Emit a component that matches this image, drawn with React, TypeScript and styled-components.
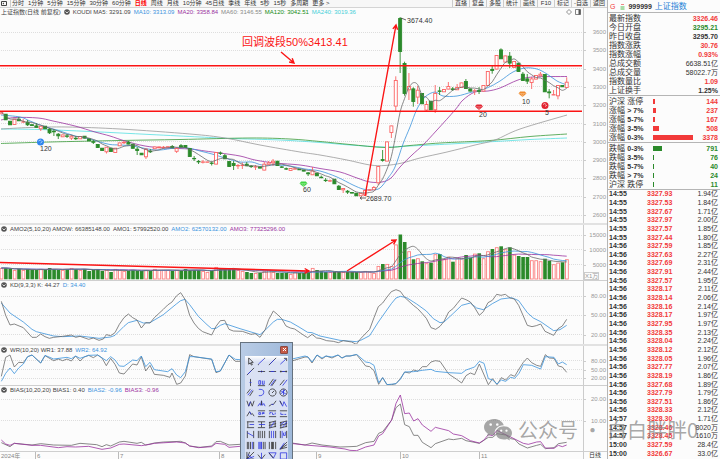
import React from "react";
import styled, { createGlobalStyle } from "styled-components";

const RED = "#f23a3a";
const GREEN = "#2b8a2b";
const BLUE = "#3b93dc";
const PURPLE = "#9a32a0";
const GRAY = "#6a6a6a";

const GlobalStyle = createGlobalStyle`
  * { box-sizing: border-box; }
  body {
    margin: 0;
    background: #fcfcfc;
    color: #333;
    font: 6px/8px "Liberation Sans", "Noto Sans CJK SC", sans-serif;
  }
  button { font: inherit; color: inherit; border: 0; padding: 0; background: none; white-space: nowrap; }
`;

/* ---------- layout ---------- */

const Page = styled.div`
  position: relative;
  display: grid;
  grid-template-columns: minmax(0, 1fr) 113px;
  min-height: 100vh;
  overflow: hidden;
`;

const ChartSide = styled.main`
  min-width: 0;
  display: flex;
  flex-direction: column;
`;

const Toolbar = styled.nav`
  display: flex;
  justify-content: space-between;
  height: 8px;
  border-bottom: 1px solid #d4d4d4;
  background: #f7f7f7;
  line-height: 7px;
`;

const Periods = styled.div`
  display: flex;
  gap: 4px;
  padding-left: 1px;
`;

const Actions = styled.div`
  display: flex;
`;

const LayoutButton = styled.button`
  display: flex;
  align-items: center;
  width: 10px;
  margin-right: -3px;
  border-right: 1px solid #ccc;
`;

const PeriodButton = styled.button<{ $active?: boolean }>`
  color: ${(p) => (p.$active ? "#f00" : "#333")};
  font-weight: ${(p) => (p.$active ? 700 : 400)};
`;

const ActionButton = styled.button`
  min-width: 17px;
  padding: 0 2px;
  border-left: 1px solid #ccc;
`;

const Panel = styled.section<{ $thick?: boolean }>`
  display: grid;
  grid-template-columns: minmax(0, 1fr) 24px;
  border-bottom: ${(p) => (p.$thick ? "2px solid #e2e2e2" : "1px solid #cfcfcf")};
`;

const PanelHeader = styled.header`
  display: flex;
  align-items: center;
  gap: 3px;
  height: 8px;
  padding-left: 1px;
  white-space: nowrap;
`;

const Reading = styled.span<{ $color?: string }>`
  color: ${(p) => p.$color || "#444"};
`;

const HeaderTools = styled.span`
  display: flex;
  gap: 3px;
  margin-left: auto;
  padding-right: 2px;
`;

const Plot = styled.svg`
  display: block;
  width: 100%;
  height: auto;
`;

const AxisTop = styled.div`
  border-left: 1px solid #ccc;
`;

const Axis = styled.div`
  position: relative;
  border-left: 1px solid #ccc;
  color: #999;
`;

const AxisLabel = styled.span`
  position: absolute;
  right: 1px;
  transform: translateY(-50%);
  &::before {
    content: "";
    position: absolute;
    right: 20px;
    top: 4px;
    width: 2px;
    border-top: 1px solid #ccc;
  }
`;

const UnitLabel = styled.span`
  position: absolute;
  left: 0;
  bottom: 0;
  height: 8px;
  line-height: 7px;
  border: 1px solid #ccc;
`;

const DateBar = styled.footer`
  display: grid;
  grid-template-columns: minmax(0, 1fr) 24px;
  color: #888;
  line-height: 7px;
`;

const PeriodName = styled.div`
  padding-left: 5px;
  border-left: 1px solid #ccc;
  color: #333;
`;

const Quote = styled.aside`
  display: flex;
  flex-direction: column;
  border-left: 1px solid #b5b5b5;
  font-size: 7px;
  line-height: 9px;
  padding-bottom: 1px;
`;

const QuoteTitle = styled.h1`
  display: flex;
  align-items: center;
  gap: 3px;
  height: 13px;
  margin: 0;
  padding: 0 2px;
  border-bottom: 1px solid #b5b5b5;
  font-size: 7px;
  white-space: nowrap;
`;

const TitleName = styled.span`
  color: #1d7fd6;
  font-size: 8px;
  font-weight: 400;
`;

const TitleFlag = styled.span`
  color: ${RED};
  font-weight: 400;
  margin-right: 2px;
`;

const StatTable = styled.table`
  display: block;
  padding: 1px 2px 0 1px;
  border-bottom: 1px solid #b5b5b5;
  tbody { display: block; }
`;

const StatRow = styled.tr<{ $bars?: boolean }>`
  display: grid;
  grid-template-columns: ${(p) => (p.$bars ? "44px 40px 1fr" : "1fr auto")};
  height: 9px;
  align-items: center;
`;

const StatName = styled.th`
  padding: 0;
  font-size: 8px;
  font-weight: 400;
  text-align: left;
  white-space: nowrap;
  b { font-size: 7px; }
`;

const StatValue = styled.td<{ $color?: string; $plain?: boolean }>`
  padding: 0;
  color: ${(p) => p.$color || "#333"};
  font-weight: ${(p) => (p.$plain ? 400 : 700)};
  text-align: right;
`;

const BarCell = styled.td`
  padding: 0;
`;

const Bar = styled.div<{ $color: string }>`
  height: 5px;
  background: ${(p) => p.$color};
`;

const TickTable = styled.table`
  display: flex;
  flex: 1;
  padding: 0 2px 0 1px;
  tbody { flex: 1; display: grid; grid-auto-rows: 1fr; }
`;

const TickRow = styled.tr`
  display: grid;
  grid-template-columns: 38px 26px 1fr;
  align-items: center;
  line-height: 8px;
  td { padding: 0; }
`;

const TickTime = styled.td`
  font-weight: 700;
`;

const TickPrice = styled.td`
  color: ${RED};
  font-weight: 700;
`;

const TickAmount = styled.td`
  text-align: right;
`;

const ToolBox = styled.div`
  position: absolute;
  left: 240px;
  top: 342px;
  width: 53px;
  height: 122px;
  display: flex;
  flex-direction: column;
  padding: 0 4px 2px;
  border: 1px solid #66727f;
  background: linear-gradient(90deg, #b9cce6, #9fb9da);
`;

const ToolTitle = styled.div`
  display: flex;
  justify-content: flex-end;
  align-items: center;
  height: 13px;
`;

const CloseButton = styled.button`
  display: flex;
  width: 8px;
  height: 8px;
  align-items: center;
  justify-content: center;
  background: #c65a48;
  border: 1px solid #8a4a44;
  border-radius: 1px;
`;

const ToolGrid = styled.div`
  flex: 1;
  display: grid;
  grid-template-columns: repeat(4, 11px);
  grid-auto-rows: 1fr;
  background: linear-gradient(#fff 0, #dae1f3 6px);
`;

const ToolButton = styled.button`
  display: flex;
  align-items: center;
  justify-content: center;
`;

const Watermark = styled.div`
  position: absolute;
  right: 22px;
  bottom: 14px;
  display: flex;
  align-items: center;
  gap: 6px;
  color: rgba(125, 125, 125, 0.68);
  font: 20px/30px "Noto Sans CJK SC", sans-serif;
  white-space: nowrap;
  pointer-events: none;
`;

/* ---------- series ---------- */

type Pt = [number, number];
const xAt = (i: number) => 1.3 + 4.383 * i;

// r = rising, g = falling; body top, body bottom, wick top, wick bottom
const CANDLES: [string, number, number, number?, number?][] = [
  ["r", 112, 114], ["g", 114, 120], ["g", 121, 125], ["r", 119, 124.7], ["g", 119, 121, 117], ["r", 121.5, 122, 119, 123],
  ["g", 122, 125, 120, 126], ["g", 124.5, 125.7], ["g", 125.7, 127.5, 123], ["r", 126, 129, 126, 131], ["g", 126, 129], ["g", 129, 133, 128, 134],
  ["g", 131, 132, 129, 136], ["g", 134, 136, 133, 139], ["r", 134.7, 137], ["g", 135.7, 136.5, 134, 138], ["r", 136, 138.3, 135, 140], ["g", 138, 139, 136, 140],
  ["r", 136.3, 139], ["g", 136, 138.3], ["g", 138.7, 141], ["g", 141.5, 142.5, 140, 144], ["g", 144.3, 147.7], ["g", 148, 150.7],
  ["r", 147, 152, 147, 153.5], ["g", 148, 151.7], ["r", 148, 152.7], ["r", 142.7, 146], ["r", 142, 143, 141, 144], ["g", 142, 144.3, 141],
  ["g", 144, 148.5], ["g", 149, 150.7, 147, 155], ["g", 153, 155], ["r", 149, 157, 148, 159], ["g", 151, 152, 149, 153], ["r", 146.7, 149],
  ["r", 146.7, 148], ["r", 147, 147.7, 146, 148.7], ["r", 146.5, 147.3], ["g", 146.3, 148, 145], ["r", 148.3, 151.5, 147, 153], ["g", 145.5, 147.3, 144],
  ["g", 145.3, 147.7], ["g", 148.3, 156.7], ["g", 158.2, 159, 156, 161], ["g", 161.3, 162, 160, 164], ["r", 161.7, 162.3, 160, 163.5], ["r", 161.7, 162.3],
  ["g", 162.8, 163.6, 161.5, 165.5], ["r", 152.3, 164.3], ["g", 152.8, 153.6, 151.5, 155], ["g", 155.5, 159, 154], ["g", 161.3, 166.7], ["g", 163.3, 165.7, 161, 170],
  ["r", 165.3, 166, 164, 169], ["r", 165, 165.7, 162.5, 169], ["g", 164, 166, 162], ["g", 166, 166.7, 165, 168], ["r", 166.5, 167.3, 165, 170], ["g", 166.7, 168.3],
  ["r", 164, 170.3, 162], ["r", 162.7, 164.5, 161], ["r", 161, 163, 159, 166], ["g", 161, 165.7], ["g", 166.7, 167.4, 166, 168], ["g", 168.5, 169.3, 167.5, 170],
  ["r", 168.3, 170.7], ["r", 168.6, 169.2, 167], ["g", 169, 170], ["g", 170, 171.3], ["g", 172.7, 174, 172, 176], ["r", 170.7, 175, 167],
  ["g", 173, 176], ["g", 177, 178, 175.5], ["g", 180, 180.7, 178, 182], ["r", 180.5, 181.3, 179.5, 182], ["g", 179, 184], ["g", 186, 189.7, 185],
  ["r", 188.3, 190, 188, 193], ["g", 191, 192.3, 190, 194], ["g", 192.3, 193.3], ["g", 193, 196], ["r", 193.3, 196], ["r", 190.3, 195.3],
  ["r", 189.5, 190.5], ["r", 187.3, 190, 186], ["r", 166.3, 183, 166, 185], ["g", 159.4, 160.6, 150, 161.7], ["r", 141.7, 161.3], ["r", 125.7, 132.7, 125.7, 138],
  ["r", 80.3, 106.3, 76.3, 112], ["g", 18.3, 51.7, 17, 73], ["g", 63.3, 93.7, 61.7, 95.7], ["r", 86.3, 90, 73, 100], ["g", 88.7, 101.7, 87.3, 106.7], ["r", 90, 97.3, 86, 104],
  ["g", 93.3, 104], ["r", 104.3, 110.3, 101, 111], ["g", 101, 110], ["r", 93.3, 110, 85, 113], ["g", 90.7, 91.6, 87, 95], ["r", 89.3, 92],
  ["r", 86.3, 89.3, 82], ["g", 88.7, 89.7, 87, 91], ["r", 87.3, 90, 84], ["r", 82.7, 87.7], ["g", 81.3, 88.7, 79], ["g", 88.7, 91.3],
  ["r", 90.5, 91.2, 89, 95], ["g", 90.5, 91.5, 87, 94], ["r", 85.3, 91.3], ["r", 71.3, 85.7], ["g", 69.3, 70.7, 65, 73.7], ["r", 55.3, 69.3],
  ["g", 49.7, 59, 48.3], ["r", 55.7, 62.3], ["g", 56, 63.3, 52, 68], ["r", 61.3, 67.7], ["g", 63, 71.7], ["g", 74, 80.7, 72],
  ["g", 78.7, 81.3, 74, 84], ["r", 78.7, 82.7, 77, 89], ["r", 75.3, 79.3], ["r", 74, 76, 72], ["g", 74.3, 92], ["g", 91.7, 93, 89, 98.3],
  ["r", 94.4, 95.1, 90], ["r", 85.3, 96, 85, 99.3], ["g", 85.3, 87], ["r", 82, 87.7, 77.3],
];

const VOL_TOPS = [
  268, 268, 269, 270, 269, 270, 269, 270, 270, 269, 270, 268, 269, 270, 270, 269, 268, 269, 270, 269, 271, 270, 269, 271, 270, 272,
  269, 270, 271, 271, 270, 271, 271, 270, 271, 269, 270, 270, 270, 271, 270, 271, 269, 270, 270, 270, 271, 272, 271, 267, 268, 269,
  269, 269, 270, 271, 272, 273, 273, 273, 271, 270, 272, 273, 273, 273, 274, 272, 273, 273, 272, 268, 270, 271, 272, 272, 272, 272,
  272, 272, 272, 272, 272, 271, 272, 273, 266, 264, 264, 266, 244.5, 234.5, 242, 251.3, 259.3, 258.3, 261.3, 263.3, 262.7, 254.3,
  254, 259.3, 256.7, 261.7, 258.3, 258.3, 255, 257.7, 253.7, 253.3, 258.3, 251.3, 249, 247.3, 246.3, 249.3, 247.3, 254.7, 256,
  257, 257, 260.3, 260.3, 261.3, 258.7, 261, 264.3, 262.7, 262.3, 259.3,
];

const average = (values: number[], n: number): Pt[] =>
  values.map((_, i) => {
    const part = values.slice(Math.max(0, i - n + 1), i + 1);
    return [xAt(i), part.reduce((a, b) => a + b, 0) / part.length];
  });

const closes = CANDLES.map(([k, top, bottom]) => (k === "r" ? top : bottom));

const MA10: Pt[] = [[1, 115], [20, 117], [30, 121], [43, 126], [60, 131], [75, 136], [90, 139], [100, 142], [110, 144.5], [120, 145], [133, 146], [148, 149], [160, 150], [175, 148], [188, 148], [200, 151], [212, 154], [225, 158], [240, 162], [252, 162], [262, 165], [275, 165], [290, 166], [305, 169], [320, 171], [337, 177], [353, 185], [363, 189], [372, 190], [380, 188], [388, 178], [395, 167], [403, 144], [410, 127], [417, 109], [425, 97], [435, 92], [443, 96], [457, 96], [472, 92], [487, 88], [500, 81], [513, 72], [525, 68], [537, 69], [547, 74], [557, 81], [567, 85]];
const MA20: Pt[] = [[1, 120], [15, 117.5], [38, 118], [53, 121], [75, 126], [95, 132], [110, 136], [125, 141], [145, 146], [165, 148], [190, 149], [205, 151], [220, 153], [240, 156], [255, 160], [275, 163], [300, 165], [320, 168.5], [340, 172], [357, 178], [370, 182], [382, 182], [391, 178], [400, 167], [412, 155], [423, 145], [437, 130], [455, 110], [463, 100], [475, 92], [488, 91], [500, 88], [518, 80], [533, 77], [567, 76.5]];
const MA60: Pt[] = [[1, 129], [30, 127.5], [67, 127], [120, 129], [190, 134], [225, 138], [260, 145], [300, 152], [320, 155], [347, 160], [370, 165], [385, 165.5], [402, 163], [420, 158], [447, 152], [475, 145], [495, 140], [520, 129], [567, 115]];
const MA120: Pt[] = [[1, 143.5], [50, 142], [120, 140.5], [180, 139.5], [250, 138], [290, 139], [320, 141.5], [350, 144.5], [385, 147.5], [410, 145.5], [440, 143], [490, 140.5], [530, 136.5], [567, 134]];
const MA240: Pt[] = [[1, 129], [40, 129.5], [90, 131.5], [150, 134.5], [200, 137], [230, 138.5], [280, 140], [320, 142.5], [350, 145], [385, 147], [410, 146], [450, 144], [495, 141.5], [530, 139.5], [567, 138]];

// Recorded at three units per pixel, shifted to where each stretch begins.
const third = (ox: number, oy: number, pts: Pt[]): Pt[] => pts.map(([x, y]) => [ox + x / 3, oy + y / 3]);

const KD_K: Pt[] = [
  ...third(0, 222, [[4, 238], [17, 280], [30, 309], [43, 306], [70, 317], [96, 346], [109, 346], [122, 336], [135, 344], [148, 349], [161, 346], [188, 343], [214, 339], [227, 346], [240, 343], [266, 352], [280, 348], [297, 355], [310, 351], [319, 338], [332, 341], [345, 332], [358, 307], [372, 287], [385, 276], [398, 287], [411, 294], [424, 318], [437, 302], [450, 303], [463, 287], [490, 262], [503, 249], [516, 240], [529, 222], [542, 212], [555, 232], [569, 280], [582, 303], [595, 319], [608, 329], [635, 339], [648, 313], [661, 296], [674, 295], [687, 322], [700, 327], [727, 328], [753, 337], [766, 335], [780, 346], [796, 322], [806, 293], [820, 267], [832, 277], [845, 290], [858, 312], [871, 318], [884, 321], [897, 330], [910, 339], [923, 347], [936, 337], [950, 348]]),
  ...third(320, 222, [[0, 349], [20, 356], [40, 358], [55, 362], [70, 356], [95, 360], [109, 367], [122, 350], [149, 322], [162, 287], [175, 254], [188, 243], [201, 225], [214, 209], [228, 203], [241, 208], [254, 226], [280, 250], [293, 260], [306, 274], [319, 289], [333, 317], [347, 322], [360, 313], [372, 298], [386, 270], [400, 259], [412, 244], [425, 228], [438, 233], [451, 240], [464, 257], [478, 280], [490, 269], [504, 242], [517, 235], [530, 217], [543, 220], [556, 217], [570, 228], [583, 231], [596, 250], [609, 280], [622, 310], [636, 314], [649, 311], [662, 306], [675, 328], [690, 335], [701, 340], [714, 320], [727, 312], [740, 292]]),
];
const KD_D: Pt[] = [
  ...third(0, 222, [[4, 243], [30, 273], [70, 300], [96, 322], [109, 329], [161, 342], [188, 344], [240, 342], [297, 349], [332, 345], [345, 340], [372, 313], [385, 302], [411, 295], [430, 303], [450, 302], [490, 278], [529, 246], [542, 236], [555, 232], [569, 248], [595, 283], [621, 308], [635, 320], [648, 319], [661, 310], [674, 305], [687, 309], [720, 320], [780, 338], [800, 320], [820, 300], [832, 292], [845, 292], [871, 300], [897, 315], [923, 331], [936, 332]]),
  ...third(320, 222, [[0, 342], [60, 355], [109, 359], [122, 355], [149, 341], [175, 300], [214, 245], [228, 228], [241, 223], [260, 227], [290, 246], [319, 267], [340, 290], [360, 302], [372, 300], [400, 274], [425, 250], [451, 243], [470, 258], [490, 263], [517, 245], [543, 231], [575, 227], [596, 236], [622, 272], [640, 288], [662, 299], [701, 326], [720, 323], [740, 310]]),
];
const WR1: Pt[] = [
  ...third(0, 340, [[4, 109], [17, 52], [30, 45], [43, 81], [56, 67], [70, 68], [83, 50], [96, 45], [122, 69], [135, 47], [161, 62], [175, 57], [188, 62], [201, 57], [214, 63], [227, 48], [240, 63], [253, 51], [266, 46], [280, 53], [293, 45], [306, 54], [319, 77], [332, 55], [345, 73], [358, 99], [372, 102], [398, 72], [411, 75], [424, 50], [437, 93], [450, 76], [463, 103], [490, 106], [510, 112], [516, 99], [530, 133], [542, 129], [556, 108], [569, 44], [582, 50], [635, 58], [648, 98], [661, 93], [687, 45], [706, 64], [720, 64]]),
  [292, 361], [305, 357], [308, 357], [312, 363], [317, 355], [322, 359], [326, 356], [332, 358], [338, 355], [342, 358], [346, 356],
  ...third(350, 340, [[0, 48], [20, 44], [47, 78], [59, 80], [72, 92], [86, 133], [98, 113], [111, 134], [125, 134], [138, 131], [151, 116], [164, 96], [178, 99], [191, 90], [204, 94], [217, 80], [230, 80], [243, 66], [256, 62], [270, 64], [296, 102], [320, 118], [335, 129], [348, 107], [361, 99], [374, 104], [388, 72], [415, 134], [428, 116], [441, 134], [454, 113], [467, 120], [482, 104], [494, 109], [507, 87], [520, 67], [532, 54], [545, 68], [560, 76], [572, 79], [586, 44], [598, 54], [612, 55], [625, 78], [637, 81], [650, 97]]),
];
const WR2: Pt[] = [
  ...third(0, 340, [[4, 124], [17, 100], [30, 84], [43, 101], [56, 84], [70, 72], [83, 50], [96, 45], [122, 69], [135, 46], [161, 57], [201, 52], [214, 56], [227, 48], [240, 55], [266, 46], [293, 45], [319, 62], [332, 50], [345, 60], [358, 78], [372, 79], [398, 60], [411, 62], [424, 48], [437, 80], [450, 67], [463, 89], [503, 95], [516, 86], [530, 105], [542, 113], [556, 95], [569, 50], [582, 50], [635, 57], [648, 95], [661, 93], [687, 45], [706, 58], [720, 59]]),
  [292, 359], [305, 356], [308, 357], [312, 362], [317, 355], [322, 358], [326, 356], [332, 357], [338, 355], [342, 358], [346, 356],
  ...third(350, 340, [[0, 48], [20, 43], [47, 66], [59, 68], [72, 76], [86, 128], [98, 113], [111, 134], [138, 131], [151, 118], [164, 96], [191, 95], [217, 91], [243, 88], [256, 94], [296, 98], [335, 100], [348, 90], [374, 81], [388, 64], [402, 70], [415, 116], [428, 120], [441, 132], [454, 120], [467, 124], [482, 112], [494, 115], [507, 100], [520, 74], [545, 76], [572, 87], [586, 50], [612, 52], [625, 72], [637, 66], [650, 74]]),
];
const BIAS1: Pt[] = [
  ...third(0, 340, [[4, 308], [30, 320], [43, 310], [96, 315], [122, 311], [161, 315], [214, 316], [240, 310], [290, 314], [306, 320], [319, 314], [332, 318], [358, 306], [372, 304], [411, 310], [424, 307], [437, 315], [463, 309], [490, 306], [542, 304], [556, 309], [569, 318], [600, 322], [635, 318], [648, 305], [661, 304], [687, 315], [720, 313]]),
  [292, 443], [305, 445], [312, 443], [322, 445], [340, 447],
  ...third(350, 340, [[0, 320], [20, 319], [47, 308], [72, 304], [86, 280], [98, 275], [125, 240], [138, 203], [151, 192], [164, 254], [178, 260], [191, 286], [204, 286], [217, 307], [243, 323], [256, 311], [296, 297], [310, 299], [335, 295], [348, 302], [388, 310], [415, 292], [428, 292], [441, 281], [467, 285], [482, 296], [494, 298], [507, 312], [532, 324], [560, 316], [572, 313], [586, 326], [612, 323], [625, 311], [650, 307]]),
];
const BIAS3: Pt[] = [
  ...third(0, 340, [[4, 300], [17, 312], [30, 316], [43, 310], [96, 316], [122, 316], [175, 323], [201, 320], [227, 321], [266, 319], [306, 328], [332, 324], [358, 313], [372, 312], [424, 317], [450, 313], [463, 310], [530, 306], [556, 309], [569, 318], [595, 323], [635, 320], [648, 310], [674, 313], [687, 322], [720, 319]]),
  [292, 443.5], [305, 445], [330, 447], [345, 449],
  ...third(350, 340, [[0, 331], [20, 332], [47, 321], [72, 315], [86, 288], [98, 281], [125, 240], [138, 190], [151, 165], [164, 221], [178, 219], [191, 243], [204, 236], [217, 255], [243, 274], [256, 262], [296, 272], [310, 282], [335, 287], [361, 302], [388, 309], [402, 300], [415, 284], [428, 287], [441, 271], [454, 278], [482, 291], [520, 310], [535, 313], [560, 306], [572, 305], [586, 324], [612, 325], [625, 316], [637, 320], [650, 315]]),
];

/* ---------- drawing helpers ---------- */

const Line = ({ pts, color, smooth, w = 0.8 }: { pts: Pt[]; color: string; smooth?: boolean; w?: number }) => {
  let d = `M${pts[0][0]} ${pts[0][1]}`;
  for (let i = 1; i < pts.length; i++) {
    const [x, y] = pts[i];
    if (!smooth) {
      d += `L${x} ${y}`;
      continue;
    }
    const a = pts[Math.max(0, i - 2)];
    const b = pts[i - 1];
    const n = pts[Math.min(pts.length - 1, i + 1)];
    d += `C${b[0] + (x - a[0]) / 6} ${b[1] + (y - a[1]) / 6} ${x - (n[0] - b[0]) / 6} ${y - (n[1] - b[1]) / 6} ${x} ${y}`;
  }
  return <path d={d} fill="none" stroke={color} strokeWidth={w} />;
};

const GridLines = ({ ys }: { ys: number[] }) => (
  <g stroke="#dedede" strokeWidth="1" strokeDasharray="1 1">
    {ys.map((y) => <path key={y} d={`M1 ${Math.floor(y) + 0.5}H582`} />)}
  </g>
);

const Arrow = ({ from, to, w = 1.4 }: { from: Pt; to: Pt; w?: number }) => {
  const t = Math.atan2(to[1] - from[1], to[0] - from[0]);
  const side = (s: number) => `${to[0] - 5 * Math.cos(t + s)} ${to[1] - 5 * Math.sin(t + s)}`;
  return (
    <path d={`M${from[0]} ${from[1]}L${to[0]} ${to[1]}M${side(0.5)}L${to[0]} ${to[1]}L${side(-0.5)}`} fill="none" stroke="#fb1414" strokeWidth={w} />
  );
};

const Gem = ({ x, y, color }: { x: number; y: number; color: string }) => (
  <g>
    <path d={`M${x - 2.3} ${y - 2.4}H${x + 2.3}L${x + 4} ${y - 0.5}L${x} ${y + 3}L${x - 4} ${y - 0.5}Z`} fill={color} />
    <path d={`M${x - 3.5} ${y - 0.4}H${x + 3.5}M${x - 1.2} ${y - 0.4}L${x} ${y + 2.4}L${x + 1.2} ${y - 0.4}`} fill="none" stroke="#fff" strokeOpacity=".55" strokeWidth=".5" />
  </g>
);

const Ball = ({ x, y, color }: { x: number; y: number; color: string }) => (
  <g>
    <circle cx={x} cy={y} r="3.5" fill={color} />
    <path d={`M${x - 2} ${y - 1}Q${x} ${y - 3} ${x + 1} ${y - 1}M${x} ${y + 1}L${x + 2} ${y - 0.5}`} fill="none" stroke="#fff" strokeOpacity=".7" strokeWidth=".9" />
  </g>
);

const Dot = () => (
  <svg width="6" height="6" viewBox="0 0 6 6" aria-hidden="true">
    <circle cx="3" cy="3" r="2.8" fill="#555" />
    <path d="M1.5 2.4L3 4L4.5 2.4" fill="none" stroke="#fff" strokeWidth=".8" />
  </svg>
);

type PanelProps = {
  name: React.ReactNode;
  readings: [string, string?][];
  top: number;
  height: number;
  ticks: [string, number][];
  thick?: boolean;
  unit?: string;
  tools?: React.ReactNode;
  children: React.ReactNode;
};

const ChartPanel = ({ name, readings, top, height, ticks, thick, unit, tools, children }: PanelProps) => (
  <Panel $thick={thick}>
    <PanelHeader>
      {name}
      {readings.map(([text, color]) => <Reading key={text} $color={color}>{text}</Reading>)}
      {tools}
    </PanelHeader>
    <AxisTop />
    <Plot viewBox={`0 ${top} 583 ${height}`}>
      <GridLines ys={ticks.map((t) => t[1])} />
      {children}
    </Plot>
    <Axis>
      {ticks.map(([label, y]) => (
        <AxisLabel key={label} style={{ top: `${((y - top) / height) * 100}%` }}>{label}</AxisLabel>
      ))}
      {unit && <UnitLabel>{unit}</UnitLabel>}
    </Axis>
  </Panel>
);

/* ---------- drawing tools ---------- */

const K = "#333";
const B = "#3038e0";
const TOOLS: [string, [string, string][]][] = [
  ["选择", [["M3 1V8L4.7 6.5L6 9L7 8.500L5.800 6H8Z", K]]],
  ["线段", [["M1.500 8L8 2", B], ["M1 8.500h1M8 1.500h1", K]]],
  ["直线", [["M1 9L9 1", K], ["M2.500 7.500L7 3", B]]],
  ["箭头", [["M1.500 8L8 2", B], ["M5.500 1.500H8.500V4.500", K]]],
  ["射线", [["M1 9L9 1", K], ["M2 8L6 4", B]]],
  ["水平线", [["M1 5H9", K], ["M3.500 5H6.500", B], ["M5 4v2", K]]],
  ["水平线段", [["M1 5H9", K], ["M3 5H7", B]]],
  ["价格线", [["M1 5H9", K], ["M2 4v2M8 4v2", K], ["M3.500 5h3", B]]],
  ["垂直线", [["M5 1V9", K], ["M4 5h2", B]]],
  ["价格标签", [["M1 8.500H9", K], ["M2 3V7H4V3ZM6 3V7M8 3V7H6", B]]],
  ["平行线", [["M1 8L6 1M4 9L9 2", K], ["M3 8.500L8 1.500", B]]],
  ["通道", [["M1 8L6 2", K], ["M4 8.500L9 2", B]]],
  ["双平行线", [["M1 6L5 1M4 9L8 3", K], ["M2 8L7 2", B]]],
  ["圆弧", [["M2 1.500Q8 1 7.500 5T2 8.500", B]]],
  ["圆", [["M5 1A4 4 0 1 1 4.900 1ZM5 4.500v1M5 5L7 3", K]]],
  ["多圆", [["M5 1A4 4 0 1 1 4.900 1Z", K], ["M2 3L8 7M2 6.500L7 2M5 1.500V8", B]]],
  ["W 形", [["M1 2L3 8L5 3L7 8L9 2", K], ["M3 8L5 3", B]]],
  ["M 形", [["M1 8L3 5L4 7L5 2L6 7L7.500 5L9 8", B], ["M5 2V7", K]]],
  ["折线", [["M1 8L4 6L6 6L9 2", K], ["M4 6L6 6", B]]],
  ["三浪", [["M1 2L4 8L5.500 3L8.500 8.500", B], ["M1 2L3 6", K]]],
  ["头肩", [["M1 8L4 3L5.500 6L7 5L9 8", K], ["M4 3L5.500 6", B]]],
  ["黄金分割", [["M1 2H9M1 8.500H9", K], ["M2 4V6H4V4ZM6 6V4H8V5H6", B]]],
  ["百分比线", [["M1 2H9M1 8.500H9", K], ["M2 6V4H4M5 4V6H7M8 4V6", B]]],
  ["波段线", [["M1 2H9M1 8.500H9", K], ["M2 4V6H5M6 6H8", B]]],
  ["一线", [["M1 2H9M1 8.500H9M2 2V8", K], ["M4 5H9", B]]],
  ["二线", [["M1 2H9M1 8.500H9M5 2V8", K], ["M2 5H9", B]]],
  ["回归带", [["M1 3L9 1M1 6L9 4M1 9L9 7M2 2V9M8 1V8", K], ["M3 8L7 2", B]]],
  ["回归通道", [["M1 3L9 1M1 6L9 4M1 9L9 7M2 2V9M8 1V8", K], ["M4 8L9 2M2 5L6 2", B]]],
  ["时间线", [["M1.500 1V9M8.500 1V9", K], ["M1.500 3L8.500 7", B]]],
  ["周期线", [["M1.500 1V9M3.500 1V9M6 1V9M8.500 1V9", K]]],
  ["等周期", [["M1.500 1V9M8.500 1V9", K], ["M3.800 1V9M6.200 1V9", B]]],
  ["价格周期", [["M1.500 1V9M8.500 1V9", K], ["M3.500 1V9M5 3V6H7V2", B]]],
  ["费波周期", [["M1.500 1V9M3 1V9M5 1V9M8.500 1V9", K], ["M7 1V9", B]]],
  ["密集周期", [["M2 1V9M3.200 1V9M4.400 1V9M5 1V9", B], ["M7 1V9M9 1V9", K]]],
  ["日历周期", [["M1.500 1V9M4 1V9M5 1V9M6 1V9M8.500 1V9", K]]],
  ["扇形线", [["M1 9L9 1M1 9L9 4M1 9L9 7", K], ["M1 9L6 2", B]]],
  ["江恩角", [["M1 1V9L9 1M1 9L4 1M1 9H9", K], ["M1 9L9 6M2 4L7 8", B]]],
  ["射线组", [["M5 9L1 4M5 9L9 4", K], ["M5 9V2", B]]],
  ["三角形", [["M1 2H9L6 8Z", B], ["M1 2L6 8", K]]],
  ["矩形", [["M1.500 2H8.500V9H1.500Z", B]]],
];

/* ---------- data ---------- */

const PERIODS = ["分时", "1分钟", "5分钟", "15分钟", "30分钟", "60分钟", "日线", "周线", "月线", "10分钟", "45日线", "季线", "年线", "5秒", "15秒", "多周期", "更多 >"];
const ACTIONS = ["直播", "复盘", "多股", "统计", "画线", "F10", "标记", "-自选", "返回"];

const STATS: [string, string, string, boolean?][] = [
  ["最新指数", "3326.46", RED], ["今日开盘", "3295.21", GREEN], ["昨日收盘", "3295.70", "#333"],
  ["指数涨跌", "30.76", RED], ["指数涨幅", "0.93%", RED], ["总成交额", "6638.51亿", "#333", true],
  ["总成交量", "58022.7万", "#333", true], ["指数量比", "1.09", RED], ["上证换手", "1.25%", "#333"],
];
const UPS: [string, string, number][] = [["涨停", "", 144], ["涨幅", "> 7%", 237], ["涨幅", "5-7%", 167], ["涨幅", "3-5%", 508], ["涨幅", "0-3%", 3378]];
const DOWNS: [string, string, number][] = [["跌幅", "0-3%", 791], ["跌幅", "3-5%", 76], ["跌幅", "5-7%", 40], ["跌幅", "> 7%", 24], ["跌停", "", 11]];

const TICKS: [string, string][] = [
  ["3327.93", "1.94亿"], ["3327.53", "1.84亿"], ["3327.67", "1.71亿"], ["3327.97", "2.00亿"], ["3327.57", "1.85亿"], ["3327.44", "1.80亿"],
  ["3327.59", "1.85亿"], ["3327.63", "2.27亿"], ["3327.69", "2.31亿"], ["3327.91", "2.44亿"], ["3327.57", "1.95亿"], ["3328.17", "2.11亿"],
  ["3328.14", "2.06亿"], ["3328.16", "2.14亿"], ["3328.17", "1.97亿"], ["3327.95", "1.97亿"], ["3328.35", "2.13亿"], ["3328.04", "2.24亿"],
  ["3328.12", "2.12亿"], ["3328.05", "1.96亿"], ["3327.77", "2.07亿"], ["3328.19", "1.86亿"], ["3327.68", "1.89亿"], ["3327.79", "1.79亿"],
  ["3327.51", "1.86亿"], ["3328.33", "2.12亿"], ["3328.30", "1.71亿"], ["3328.46", "8020万"], ["3328.45", "1610万"], ["3327.59", "28.4亿"],
  ["3326.67", "33.0亿"],
];
const timeAt = (i: number) => (i < 6 ? "14:55" : i < 26 ? "14:56" : i < 29 ? "14:57" : "15:00");

const MONTHS: [string, number][] = [["6", 35.5], ["7", 118.5], ["8", 219.5], ["9", 316.5], ["10", 400.5], ["11", 479.5]];
const PRICE_TICKS = Array.from({ length: 11 }, (_, i): [string, number] => [String(3600 - i * 100), 32 + i * 18.3]);

const Breadth = ({ rows, color }: { rows: [string, string, number][]; color: string }) => (
  <StatTable>
    <tbody>
      {rows.map(([name, range, count]) => (
        <StatRow key={count} $bars>
          <StatName scope="row">{range ? <>{name} <b>{range}</b></> : <>沪深 {name}</>}</StatName>
          <BarCell><Bar $color={color} style={{ width: `${Math.max(2, (count / 3378) * 100)}%` }} /></BarCell>
          <StatValue $color={color}>{count}</StatValue>
        </StatRow>
      ))}
    </tbody>
  </StatTable>
);

export default function App() {
  return (
    <Page>
      <GlobalStyle />
      <ChartSide>
        <Toolbar>
          <Periods>
            <LayoutButton aria-label="布局">
              <svg width="6" height="5" viewBox="0 0 6 5"><path d="M.5.5h5v4h-5z" fill="none" stroke="#444" /><path d="M3 1.500L1.500 2.500L3 3.500z" fill="#444" /></svg>
            </LayoutButton>
            {PERIODS.map((p) => <PeriodButton key={p} $active={p === "日线"}>{p}</PeriodButton>)}
          </Periods>
          <Actions>{ACTIONS.map((a) => <ActionButton key={a}>{a}</ActionButton>)}</Actions>
        </Toolbar>

        <ChartPanel
          name={<><Reading>上证指数(日线 前复权)</Reading><Dot /></>}
          readings={[["KOUDI MA5: 3291.09"], ["MA10: 3313.09", BLUE], ["MA20: 3358.84", PURPLE], ["MA60: 3146.55", "#888"], ["MA120: 3042.51", "#138a13"], ["MA240: 3019.36", "#45cfd8"]]}
          top={16}
          height={207}
          ticks={PRICE_TICKS}
          thick
          tools={
            <HeaderTools>
              <svg width="6" height="6" viewBox="0 0 6 6"><path d="M3 .5L5.500 3L3 5.500L.5 3z" fill="none" stroke="#666" strokeWidth=".7" /></svg>
              <svg width="6" height="6" viewBox="0 0 6 6"><path d="M.5.5h5v5h-5z" fill="none" stroke="#666" strokeWidth=".8" /><path d="M3.500 .5h2v5h-2z" fill="#555" /></svg>
            </HeaderTools>
          }
        >
          <Line pts={MA240} color="#55dfe2" smooth />
          <Line pts={MA120} color="#3a9a3a" smooth />
          <Line pts={MA60} color="#999" smooth />
          <Line pts={MA20} color={PURPLE} smooth />
          <Line pts={MA10} color={BLUE} smooth />
          {CANDLES.map(([kind, a, b, hi = a, lo = b], i) => {
            const x = xAt(i);
            const up = kind === "r";
            return (
              <g key={i} stroke={up ? "#fb6464" : GREEN} strokeWidth=".9" fill={up ? "#fff" : GREEN}>
                <path d={`M${x} ${hi}V${lo}`} />
                <rect x={x - 1.5} y={a + 0.2} width="3" height={Math.max(0.4, b - a - 0.4)} />
              </g>
            );
          })}
          <Line pts={average(closes, 5)} color={GRAY} smooth />
          <path d="M0 65.700H582M0 111.300H582" stroke="#fb1414" strokeWidth="1.5" />
          <Arrow from={[365, 196]} to={[396, 25]} />
          <Arrow from={[281, 52]} to={[294, 63]} />
          <text x="242" y="46" fontSize="11" fill="#fb1414">回调波段50%3413.41</text>
          <g fontSize="7" fill="#333">
            <path d="M401 18L406 20M366 198H360M362 196.500L360 198L362 199.500" fill="none" stroke="#444" strokeWidth=".8" />
            <text x="407" y="23">3674.40</text>
            <text x="366" y="201">2689.70</text>
            <Ball x={40.5} y={142} color="#2f86ee" />
            <text x="40" y="151">120</text>
            <Gem x={303.5} y={184} color="#3fd63f" />
            <text x="303" y="192">60</text>
            <Gem x={479} y={107} color="#e22330" />
            <text x="479" y="117">20</text>
            <Gem x={522.5} y={94} color="#f08a2c" />
            <text x="522" y="104">10</text>
            <Ball x={545} y={105.5} color="#e22330" />
            <text x="545" y="115">5</text>
          </g>
        </ChartPanel>

        <ChartPanel
          name={<Dot />}
          readings={[["AMO2(5,10,20) AMOW: 66385148.00"], ["AMO1: 57992520.00"], ["AMO2: 62570132.00", BLUE], ["AMO3: 77325296.00", PURPLE]]}
          top={233}
          height={47}
          ticks={[["15000", 235], ["10000", 249.5], ["5000", 264.5]]}
          unit="X1万"
        >
          {VOL_TOPS.map((y, i) =>
            CANDLES[i][0] === "r" ? (
              <rect key={i} x={xAt(i) - 1.2} y={y + 0.4} width="2.8" height={278.6 - y} fill="#fff" stroke="#fb8080" strokeWidth=".9" />
            ) : (
              <rect key={i} x={xAt(i) - 1.6} y={y} width="3.6" height={279.3 - y} fill={GREEN} />
            ),
          )}
          <Line pts={average(VOL_TOPS, 20)} color={PURPLE} />
          <Line pts={average(VOL_TOPS, 10)} color={BLUE} />
          <Line pts={average(VOL_TOPS, 5)} color={GRAY} smooth />
          <Arrow from={[0, 262.5]} to={[309, 271]} />
          <Arrow from={[347, 271]} to={[396, 240]} />
        </ChartPanel>

        <ChartPanel name={<Dot />} readings={[["KD(9,3,3) K: 44.27"], ["D: 34.40", BLUE]]} top={289} height={55} ticks={[["80.00", 296], ["50.00", 315], ["20.00", 334.5]]} thick>
          <Line pts={KD_D} color={BLUE} />
          <Line pts={KD_K} color={GRAY} />
        </ChartPanel>

        <ChartPanel name={<Dot />} readings={[["WR(10,20) WR1: 37.88"], ["WR2: 64.92", BLUE]]} top={354} height={31} ticks={[["80.00", 360.5], ["50.00", 369.5], ["20.00", 378]]}>
          <Line pts={WR1} color={GRAY} />
          <Line pts={WR2} color={BLUE} />
        </ChartPanel>

        <ChartPanel name={<Dot />} readings={[["BIAS(10,20,20) BIAS1: 0.40"], ["BIAS2: -0.96", BLUE], ["BIAS3: -0.96", PURPLE]]} top={394} height={57} ticks={[["20.00", 399], ["10.00", 420.5]]}>
          <Line pts={BIAS1} color={GRAY} />
          <Line pts={BIAS3} color={PURPLE} />
        </ChartPanel>

        <DateBar>
          <Plot viewBox="0 452 583 7" fill="#888">
            <text x="1" y="458" fontSize="6">2024年</text>
            {MONTHS.map(([m, x]) => (
              <g key={m}>
                <path d={`M${x} 452V459`} stroke="#bbb" />
                <text x={x + 1.5} y="458" fontSize="6">{m}</text>
              </g>
            ))}
          </Plot>
          <PeriodName>日线</PeriodName>
        </DateBar>
      </ChartSide>

      <Quote>
        <QuoteTitle>
          <TitleFlag>G</TitleFlag>
          <svg width="5" height="7" viewBox="0 0 5 7"><path d="M1 1.500h3" stroke="#e88" /><path d="M.5 4h4M.5 6h4" stroke="#5b5" /></svg>
          999999 <TitleName>上证指数</TitleName>
        </QuoteTitle>
        <StatTable>
          <tbody>
            {STATS.map(([name, value, color, plain]) => (
              <StatRow key={name}>
                <StatName scope="row">{name}</StatName>
                <StatValue $color={color} $plain={plain}>{value}</StatValue>
              </StatRow>
            ))}
          </tbody>
        </StatTable>
        <Breadth rows={UPS} color={RED} />
        <Breadth rows={DOWNS} color={GREEN} />
        <TickTable>
          <tbody>
            {TICKS.map(([price, amount], i) => (
              <TickRow key={i}>
                <TickTime>{timeAt(i)}</TickTime>
                <TickPrice>{price}</TickPrice>
                <TickAmount>{amount}</TickAmount>
              </TickRow>
            ))}
          </tbody>
        </TickTable>
      </Quote>

      <ToolBox role="toolbar" aria-label="画线工具">
        <ToolTitle>
          <CloseButton aria-label="关闭">
            <svg width="5" height="5" viewBox="0 0 5 5"><path d="M1 1L4 4M4 1L1 4" stroke="#fff" /></svg>
          </CloseButton>
        </ToolTitle>
        <ToolGrid>
          {TOOLS.map(([label, strokes]) => (
            <ToolButton key={label} aria-label={label}>
              <svg width="9" height="9" viewBox="0 0 10 10" fill="none">
                {strokes.map(([d, color], i) => <path key={i} d={d} stroke={color} strokeWidth=".9" />)}
              </svg>
            </ToolButton>
          ))}
        </ToolGrid>
      </ToolBox>

      <Watermark>
        <svg width="28" height="22" viewBox="0 0 28 22" aria-hidden="true">
          <path fillRule="evenodd" fill="currentColor" d="M10 0C4.500 0 0 3.600 0 8.200C0 10.800 1.400 13 3.800 14.500L2.800 17.500L6.300 15.700Q8.500 16.400 11 16.300C9.500 10.500 13.500 6.500 19.800 6.300C18.700 2.600 14.800 0 10 0ZM6.700 4.200a1.300 1.300 0 1 1-.01 0ZM13.300 4.200a1.300 1.300 0 1 1-.01 0Z" />
          <path fillRule="evenodd" fill="currentColor" d="M19.800 7.300C15.300 7.300 11.800 10.200 11.800 13.900S15.300 20.400 19.800 20.400Q21.500 20.400 23 19.900L26 21.500L25.200 19C27 17.700 28 15.900 28 13.900C28 10.200 24.300 7.300 19.800 7.300ZM17.200 10.500a1.100 1.100 0 1 1-.01 0ZM22.500 10.500a1.100 1.100 0 1 1-.01 0Z" />
        </svg>
        公众号 · 白白胖胖0
      </Watermark>
    </Page>
  );
}
